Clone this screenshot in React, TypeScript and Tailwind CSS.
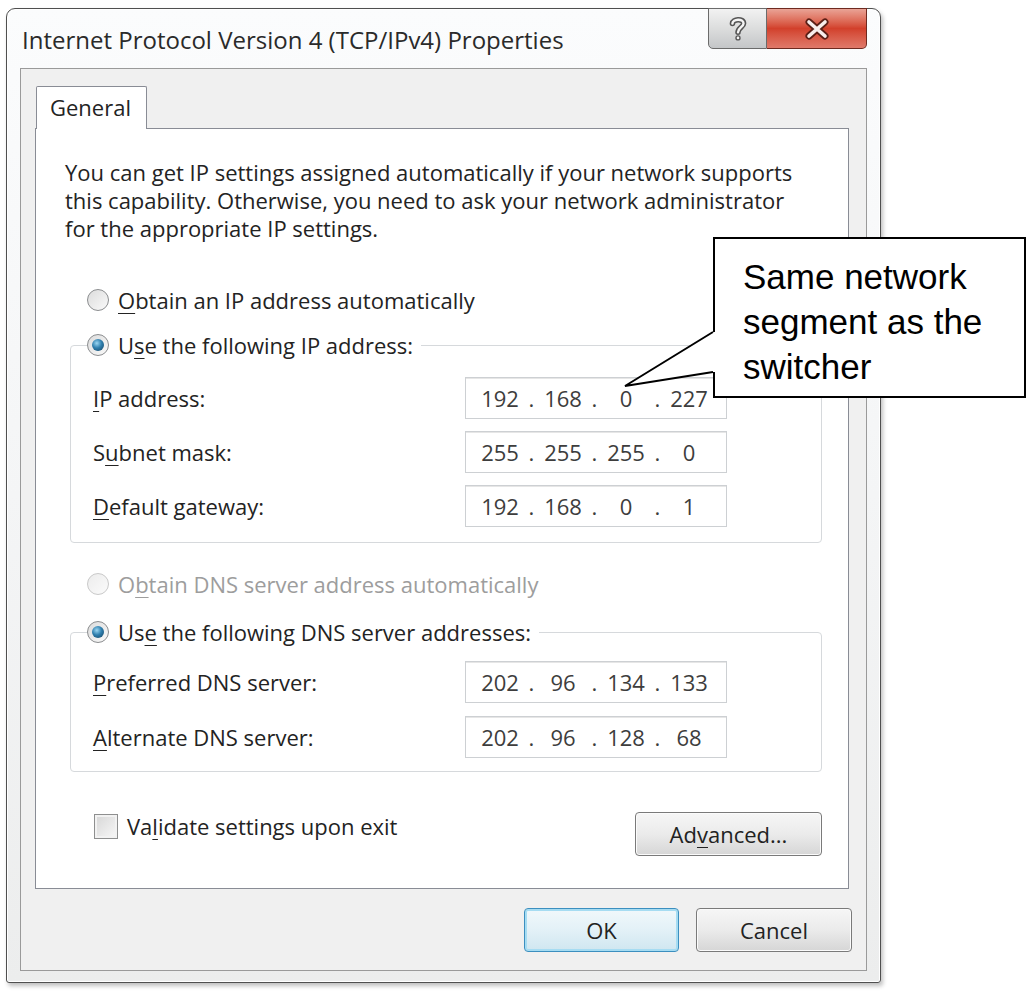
import type { ReactNode } from "react";

// access-key letter, underlined like the Windows shell draws it
const Key = ({ children }: { children: ReactNode }) => (
  <span className="underline decoration-1 underline-offset-[4px]">
    {children}
  </span>
);

const Radio = ({
  checked = false,
  disabled = false,
}: {
  checked?: boolean;
  disabled?: boolean;
}) => (
  <span
    className={
      disabled
        ? "flex h-[22px] w-[22px] shrink-0 items-center justify-center rounded-full border border-[#c9c9c9] bg-linear-to-br from-[#ececec] to-[#fbfbfb]"
        : "flex h-[22px] w-[22px] shrink-0 items-center justify-center rounded-full border border-[#8b8d8f] bg-linear-to-br from-[#dcdcdc] to-[#fafafa]"
    }
  >
    {checked && (
      <span className="h-[12px] w-[12px] rounded-full bg-[radial-gradient(circle_at_40%_35%,#9ad6f2_0%,#2f7fae_45%,#123f5e_100%)]" />
    )}
  </span>
);

const IpField = ({ parts }: { parts: string[] }) => (
  <div
    className="
      flex h-[42px] w-[262px] items-center
      border border-[#cdd0d3]
      bg-white pl-[8px]
      text-[#3d3d3d]
      shadow-[inset_0_1px_0_#e6e6e6]
    "
  >
    {parts.map((p, i) => (
      <span key={i} className="flex items-center">
        {i > 0 && <span className="w-[11px] text-center">.</span>}
        <span className="w-[52px] text-center">{p}</span>
      </span>
    ))}
  </div>
);

const FieldRow = ({
  label,
  parts,
}: {
  label: ReactNode;
  parts: string[];
}) => (
  <div className="flex h-[42px] items-center">
    <div className="w-[372px]">{label}</div>
    <IpField parts={parts} />
  </div>
);

const WinButton = ({
  children,
  isDefault = false,
  className = "",
}: {
  children: ReactNode;
  isDefault?: boolean;
  className?: string;
}) => (
  <div
    className={
      (isDefault
        ? "border border-[#3c8fbf] bg-linear-to-b from-[#f1f8fb] via-[#e3f1f7] to-[#cfe6f0] shadow-[inset_0_0_0_2px_#a6dcf2] "
        : "border border-[#7a7a7a] bg-linear-to-b from-[#f6f6f6] via-[#ebebeb] to-[#d6d6d6] shadow-[inset_0_0_0_1px_#fbfbfb] ") +
      "flex h-[44px] items-center justify-center rounded-[4px] text-[#222] " +
      className
    }
  >
    {children}
  </div>
);

const HelpGlyph = () => (
  <svg width="20" height="28" viewBox="0 0 18 24">
    <g fill="none" strokeLinecap="round" strokeLinejoin="round">
      <path
        d="M4 7 C4 3 14 2 14 7 C14 10 9 11 9 15"
        stroke="#555"
        strokeWidth="5"
      />
      <path
        d="M4 7 C4 3 14 2 14 7 C14 10 9 11 9 15"
        stroke="#f4f4f4"
        strokeWidth="2.2"
      />
      <circle cx="9" cy="20" r="2.4" fill="#555" />
      <circle cx="9" cy="20" r="1.2" fill="#f4f4f4" />
    </g>
  </svg>
);

const CloseGlyph = () => (
  <svg width="26" height="22" viewBox="0 0 26 22">
    <g strokeLinecap="round">
      <path d="M5 4 L21 18 M21 4 L5 18" stroke="#5b1f16" strokeWidth="7" />
      <path d="M5 4 L21 18 M21 4 L5 18" stroke="#f7eeec" strokeWidth="3.6" />
    </g>
  </svg>
);

export default function App() {
  return (
    <div className="relative h-[993px] w-[1028px] overflow-hidden bg-white font-['Open_Sans',sans-serif] text-[22px] leading-[28px] text-[#232323]">
      {/* WINDOW */}
      <div
        className="
          ml-[6px] mt-[8px]
          flex h-[975px] w-[875px] flex-col
          rounded-t-[9px] rounded-b-[3px]
          border border-[#4f4f4f]
          bg-linear-to-b from-[#fbfcfd] via-[#f4f5f6] to-[#eceded]
          px-[13px]
          shadow-[inset_0_0_0_1px_#ffffff,2px_3px_4px_rgba(0,0,0,0.25)]
        "
      >
        {/* TITLE BAR */}
        <div className="flex h-[59px] shrink-0 items-start justify-between">
          <div className="mt-[17px] pl-[2px] text-[24px] text-[#2a2a2a]">
            Internet Protocol Version 4 (TCP/IPv4) Properties
          </div>
          <div className="-mt-px flex h-[41px]">
            <div className="flex w-[59px] items-center justify-center rounded-bl-[5px] border border-[#6b6b6b] bg-linear-to-b from-[#f2f2f2] via-[#dcdddd] to-[#c4c6c8]">
              <HelpGlyph />
            </div>
            <div className="flex w-[100px] items-center justify-center rounded-br-[5px] border border-l-0 border-[#6e2a20] bg-linear-to-b from-[#e9a396] via-[#d2402b] to-[#e0796a]">
              <CloseGlyph />
            </div>
          </div>
        </div>

        {/* CLIENT AREA */}
        <div className="flex h-[903px] flex-col border border-[#9a9a9a] bg-[#f0f0f0] px-[14px] pt-[17px]">
          {/* TABS */}
          <div className="flex h-[42px]">
            <div className="relative z-10 ml-[1px] h-[43px] w-[111px] rounded-t-[2px] border border-b-0 border-[#898c95] bg-white pl-[13px] pt-[6px]">
              General
            </div>
          </div>

          {/* PANEL */}
          <div className="flex h-[761px] w-[814px] flex-col border border-[#898c95] bg-white pl-[34px] pt-[29px]">
            <p className="-ml-[5px] w-[760px]">
              You can get IP settings assigned automatically if your network supports
              <br />
              this capability. Otherwise, you need to ask your network administrator
              <br />
              for the appropriate IP settings.
            </p>

            <div className="ml-[17px] mt-[44px] flex h-[28px] items-center gap-[9px]">
              <Radio />
              <span>
                <Key>O</Key>btain an IP address automatically
              </span>
            </div>

            <fieldset className="mt-[17px] w-[752px] rounded-[4px] border border-[#d6d9dc] pb-[15px] pt-[18px]">
              <legend className="ml-[16px] flex h-[28px] items-center gap-[9px] pr-[8px]">
                <Radio checked />
                <span>
                  U<Key>s</Key>e the following IP address:
                </span>
              </legend>
              <div className="flex flex-col gap-[12px] pl-[22px]">
                <FieldRow
                  label={
                    <>
                      <Key>I</Key>P address:
                    </>
                  }
                  parts={["192", "168", "0", "227"]}
                />
                <FieldRow
                  label={
                    <>
                      S<Key>u</Key>bnet mask:
                    </>
                  }
                  parts={["255", "255", "255", "0"]}
                />
                <FieldRow
                  label={
                    <>
                      <Key>D</Key>efault gateway:
                    </>
                  }
                  parts={["192", "168", "0", "1"]}
                />
              </div>
            </fieldset>

            <div className="ml-[17px] mt-[27px] flex h-[28px] items-center gap-[9px] text-[#9d9d9d]">
              <Radio disabled />
              <span>
                O<Key>b</Key>tain DNS server address automatically
              </span>
            </div>

            <fieldset className="mt-[20px] w-[752px] rounded-[4px] border border-[#d6d9dc] pb-[13px] pt-[15px]">
              <legend className="ml-[16px] flex h-[28px] items-center gap-[9px] pr-[8px]">
                <Radio checked />
                <span>
                  Us<Key>e</Key> the following DNS server addresses:
                </span>
              </legend>
              <div className="flex flex-col gap-[13px] pl-[22px]">
                <FieldRow
                  label={
                    <>
                      <Key>P</Key>referred DNS server:
                    </>
                  }
                  parts={["202", "96", "134", "133"]}
                />
                <FieldRow
                  label={
                    <>
                      <Key>A</Key>lternate DNS server:
                    </>
                  }
                  parts={["202", "96", "128", "68"]}
                />
              </div>
            </fieldset>

            {/* VALIDATE + ADVANCED */}
            <div className="mt-[40px] flex w-[752px] items-start justify-between">
              <div className="ml-[24px] flex h-[28px] items-center gap-[9px]">
                <span className="h-[25px] w-[24px] border border-[#8e8f8f] bg-linear-to-br from-[#d6d6d6] to-[#f8f8f8] shadow-[inset_0_0_0_2px_#f2f2f2]" />
                <span>
                  Va<Key>l</Key>idate settings upon exit
                </span>
              </div>
              <WinButton className="w-[187px]">
                <span>
                  Ad<Key>v</Key>anced...
                </span>
              </WinButton>
            </div>
          </div>

          {/* DIALOG BUTTONS */}
          <div className="mt-[19px] flex justify-end gap-[17px]">
            <WinButton isDefault className="w-[155px]">
              OK
            </WinButton>
            <WinButton className="w-[156px]">Cancel</WinButton>
          </div>
        </div>
      </div>

      {/* CALLOUT */}
      <div
        className="
          absolute left-[713px] top-[237px]
          h-[161px] w-[313px]
          border-2 border-black bg-white
          pl-[28px] pt-[15px]
          font-['Liberation_Sans',Arial,sans-serif]
          text-[35px] leading-[45px] text-black
        "
      >
        Same network
        <br />
        segment as the
        <br />
        switcher
      </div>
      <svg
        className="absolute left-[620px] top-[326px]"
        width="100"
        height="66"
        viewBox="0 0 100 66"
      >
        <polygon points="5,60 93,6 96,6 96,46 93,46" fill="#ffffff" />
        <polyline
          points="93,6 5,60 93,46"
          fill="none"
          stroke="#000"
          strokeWidth="2"
          strokeLinejoin="miter"
        />
      </svg>
    </div>
  );
}
